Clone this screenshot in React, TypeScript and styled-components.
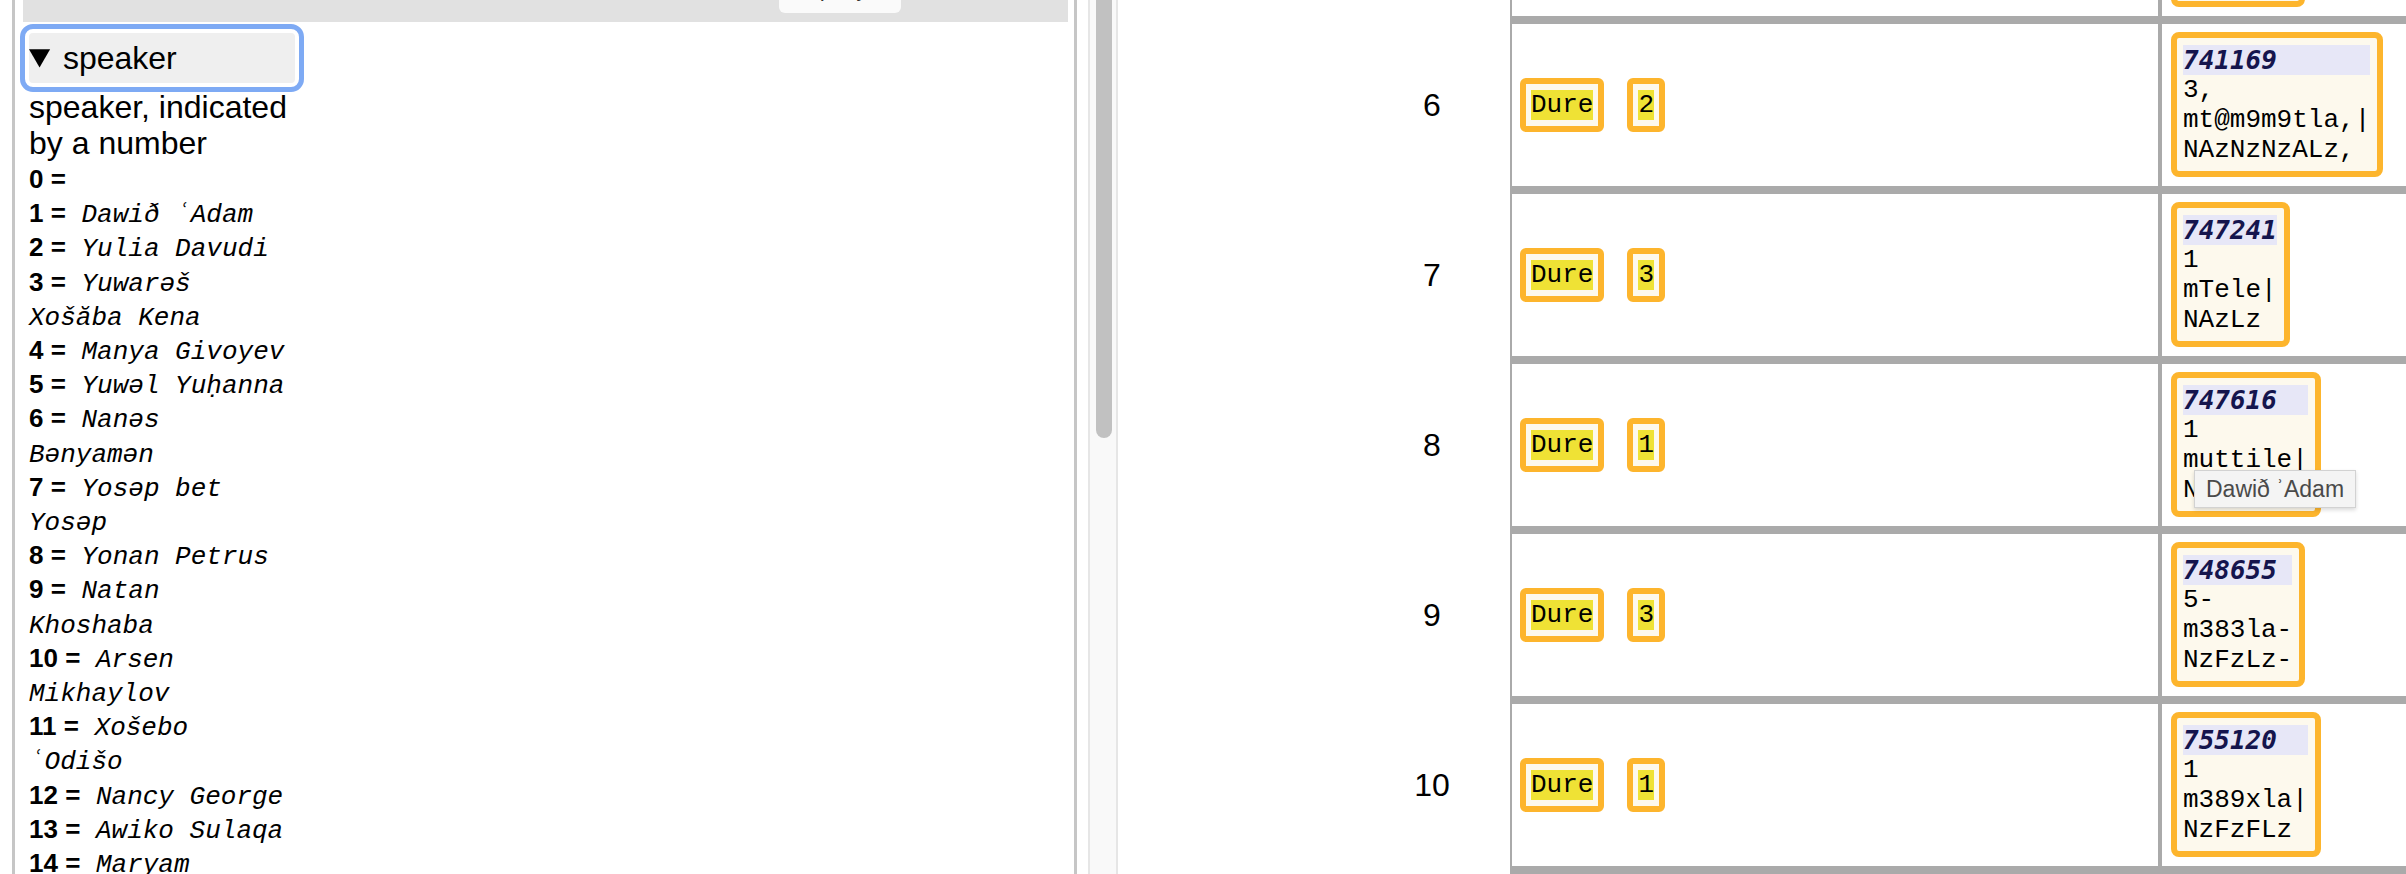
import React from "react";
import styled, { createGlobalStyle } from "styled-components";

const GlobalStyle = createGlobalStyle`
  html, body {
    margin: 0;
    padding: 0;
    background: #ffffff;
    overflow: hidden;
  }
  #root {
    width: 2406px;
    height: 874px;
  }
`;

const Page = styled.div`
  position: relative;
  display: flex;
  width: 2406px;
  height: 874px;
  overflow: hidden;
  font-family: "Liberation Sans", Arial, sans-serif;
  color: #000;
`;

/* ---------- left pane ---------- */

const LeftPane = styled.div`
  flex: 0 0 1065px;
  box-sizing: border-box;
  margin-left: 12px;
  border-left: 3px solid #c6c6c6;
  border-right: 3px solid #c6c6c6;
  overflow: hidden;
`;

const TopBar = styled.div`
  display: flex;
  height: 22px;
  margin: 0 6px 0 8px;
  background: #e1e1e1;
`;

const BarButton = styled.div`
  box-sizing: border-box;
  width: 122px;
  height: 41px;
  margin: -28px 0 0 756px;
  padding-top: 6px;
  border-radius: 6px;
  background: #fafafa;
  color: #333;
  font-size: 22px;
  line-height: 22px;
  text-align: center;
`;

const Details = styled.details`
  width: 268px;
  margin: 11px 0 0 14px;
`;

const Summary = styled.summary`
  box-sizing: border-box;
  width: 266px;
  height: 50px;
  background: #efefef;
  border-radius: 4px;
  font-size: 32px;
  line-height: 50px;
  outline: 5px solid #7eaaf4;
  outline-offset: 4px;
  cursor: pointer;
`;

const Description = styled.div`
  margin-top: 6px;
  font-size: 32px;
  line-height: 36px;
`;

const Legend = styled.div`
  margin-top: 3px;
  font-family: "Liberation Mono", "DejaVu Sans Mono", monospace;
  font-size: 26px;
  line-height: 34.2px;
`;

const LegendEntry = styled.div``;

const LegendKey = styled.b`
  font-family: "Liberation Sans", Arial, sans-serif;
  font-size: 26px;
  font-weight: bold;
  line-height: 1;
`;

const LegendName = styled.i`
  font-family: "Liberation Mono", "DejaVu Sans Mono", monospace;
  font-style: italic;
  line-height: 1;
`;

const Word = styled.span`
  white-space: nowrap;
`;

const Ayin = styled.span`
  display: inline-block;
  width: 1ch;
  text-align: center;
`;

/* ---------- scrollbar between panes ---------- */

const ScrollGutter = styled.div`
  flex: 0 0 41px;
  box-sizing: border-box;
  display: flex;
  padding-left: 11px;
`;

const ScrollTrack = styled.div`
  box-sizing: border-box;
  width: 30px;
  padding: 0 4px 0 6px;
  border-left: 2px solid #e6e6e6;
  border-right: 2px solid #e6e6e6;
  background: #f9f9f9;
`;

const ScrollThumb = styled.div`
  height: 438px;
  border-radius: 0 0 8px 8px;
  background: #c1c1c1;
`;

/* ---------- right pane ---------- */

const RightPane = styled.div`
  flex: 1;
  min-width: 0;
  box-sizing: border-box;
  padding-left: 236px;
`;

const Table = styled.div`
  margin-top: -146px;
`;

const TableRow = styled.div`
  display: grid;
  grid-template-columns: 156px 648px 1fr;
`;

const NumberCell = styled.div`
  display: flex;
  align-items: center;
  justify-content: center;
  padding-bottom: 8px;
  font-size: 32px;
`;

const TagCell = styled.div`
  display: flex;
  align-items: center;
  gap: 23px;
  padding-left: 8px;
  border-left: 2px solid #aaaaaa;
  border-bottom: 8px solid #aaaaaa;
`;

const Tag = styled.span`
  display: inline-flex;
  padding: 6px 5px;
  border: 6px solid #fdb52d;
  border-radius: 6px;
  background: #fdf9ed;
`;

const TagText = styled.span`
  background: #efe235;
  font-family: "Liberation Mono", "Courier New", monospace;
  font-size: 26px;
  line-height: 30px;
`;

const CardCell = styled.div`
  padding: 8px 9px 9px 9px;
  border-left: 4px solid #aaaaaa;
  border-bottom: 8px solid #aaaaaa;
`;

const Card = styled.div`
  width: fit-content;
  padding: 7px 7px 6px 6px;
  border: 6px solid #fdb52d;
  border-radius: 8px;
  background: #fdf9ed;
  font-family: "Liberation Mono", "Courier New", monospace;
  font-size: 26px;
  line-height: 30px;
  white-space: pre;
`;

const CardId = styled.div`
  background: #e7e7f7;
  color: #15154d;
  font-family: "DejaVu Sans Mono", monospace;
  font-weight: bold;
  font-style: italic;
`;

const CardLine = styled.div``;

const Tooltip = styled.div`
  position: absolute;
  left: 2194px;
  top: 470px;
  box-sizing: border-box;
  height: 38px;
  padding: 0 11px;
  border: 1px solid #d2d2d2;
  background: #f4f4f4;
  box-shadow: 0 2px 4px rgba(0, 0, 0, 0.15);
  color: #4a4a4a;
  font-family: "Liberation Sans", Arial, sans-serif;
  font-size: 23px;
  line-height: 36px;
  white-space: nowrap;
`;

/* ---------- data ---------- */

const speakers: [number, string][] = [
  [0, ""],
  [1, "Dawið ʿAdam"],
  [2, "Yulia Davudi"],
  [3, "Yuwarəš Xošăba Kena"],
  [4, "Manya Givoyev"],
  [5, "Yuwəl Yuḥanna"],
  [6, "Nanəs Bənyamən"],
  [7, "Yosəp bet Yosəp"],
  [8, "Yonan Petrus"],
  [9, "Natan Khoshaba"],
  [10, "Arsen Mikhaylov"],
  [11, "Xošebo ʿOdišo"],
  [12, "Nancy George"],
  [13, "Awiko Sulaqa"],
  [14, "Maryam"],
  [15, "Lina Lazar"],
];

type Row = { n: number; tags: string[]; id: string; lines: string[] };

const rows: Row[] = [
  { n: 5, tags: ["Dure", "1"], id: "739402", lines: ["1", "mamlak|", "NAzLzz"] },
  { n: 6, tags: ["Dure", "2"], id: "741169", lines: ["3,", "mt@m9m9tla,|", "NAzNzNzALz,"] },
  { n: 7, tags: ["Dure", "3"], id: "747241", lines: ["1", "mTele|", "NAzLz"] },
  { n: 8, tags: ["Dure", "1"], id: "747616", lines: ["1", "muttile|", "NAzLzLz"] },
  { n: 9, tags: ["Dure", "3"], id: "748655", lines: ["5-", "m383la-", "NzFzLz-"] },
  { n: 10, tags: ["Dure", "1"], id: "755120", lines: ["1", "m389xla|", "NzFzFLz"] },
];

function renderName(name: string) {
  const words = name.split(" ");
  return words.map((w, i) => {
    const sep = i > 0 ? " " : "";
    if (!w.includes("ʿ")) return sep + w;
    const parts = w.split("ʿ");
    return (
      <React.Fragment key={i}>
        {sep}
        <Word>
          {parts.map((p, j) => (
            <React.Fragment key={j}>
              {j > 0 ? <Ayin>ʿ</Ayin> : null}
              {p}
            </React.Fragment>
          ))}
        </Word>
      </React.Fragment>
    );
  });
}

export default function App() {
  return (
    <>
      <GlobalStyle />
      <Page>
        <LeftPane>
          <TopBar>
            <BarButton>query</BarButton>
          </TopBar>
          <Details open>
            <Summary>speaker</Summary>
            <Description>speaker, indicated by a number</Description>
            <Legend>
              {speakers.map(([n, name]) => (
                <LegendEntry key={n}>
                  <LegendKey>{n} =</LegendKey>
                  {name ? " " : ""}
                  {name ? <LegendName>{renderName(name)}</LegendName> : null}
                </LegendEntry>
              ))}
            </Legend>
          </Details>
        </LeftPane>

        <ScrollGutter>
          <ScrollTrack>
            <ScrollThumb />
          </ScrollTrack>
        </ScrollGutter>

        <RightPane>
          <Table>
            {rows.map((r) => (
              <TableRow key={r.n}>
                <NumberCell>{r.n}</NumberCell>
                <TagCell>
                  {r.tags.map((t, i) => (
                    <Tag key={i}>
                      <TagText>{t}</TagText>
                    </Tag>
                  ))}
                </TagCell>
                <CardCell>
                  <Card>
                    <CardId>{r.id}</CardId>
                    {r.lines.map((l, i) => (
                      <CardLine key={i}>{l}</CardLine>
                    ))}
                  </Card>
                </CardCell>
              </TableRow>
            ))}
          </Table>
        </RightPane>

        <Tooltip>Dawið ʾAdam</Tooltip>
      </Page>
    </>
  );
}
